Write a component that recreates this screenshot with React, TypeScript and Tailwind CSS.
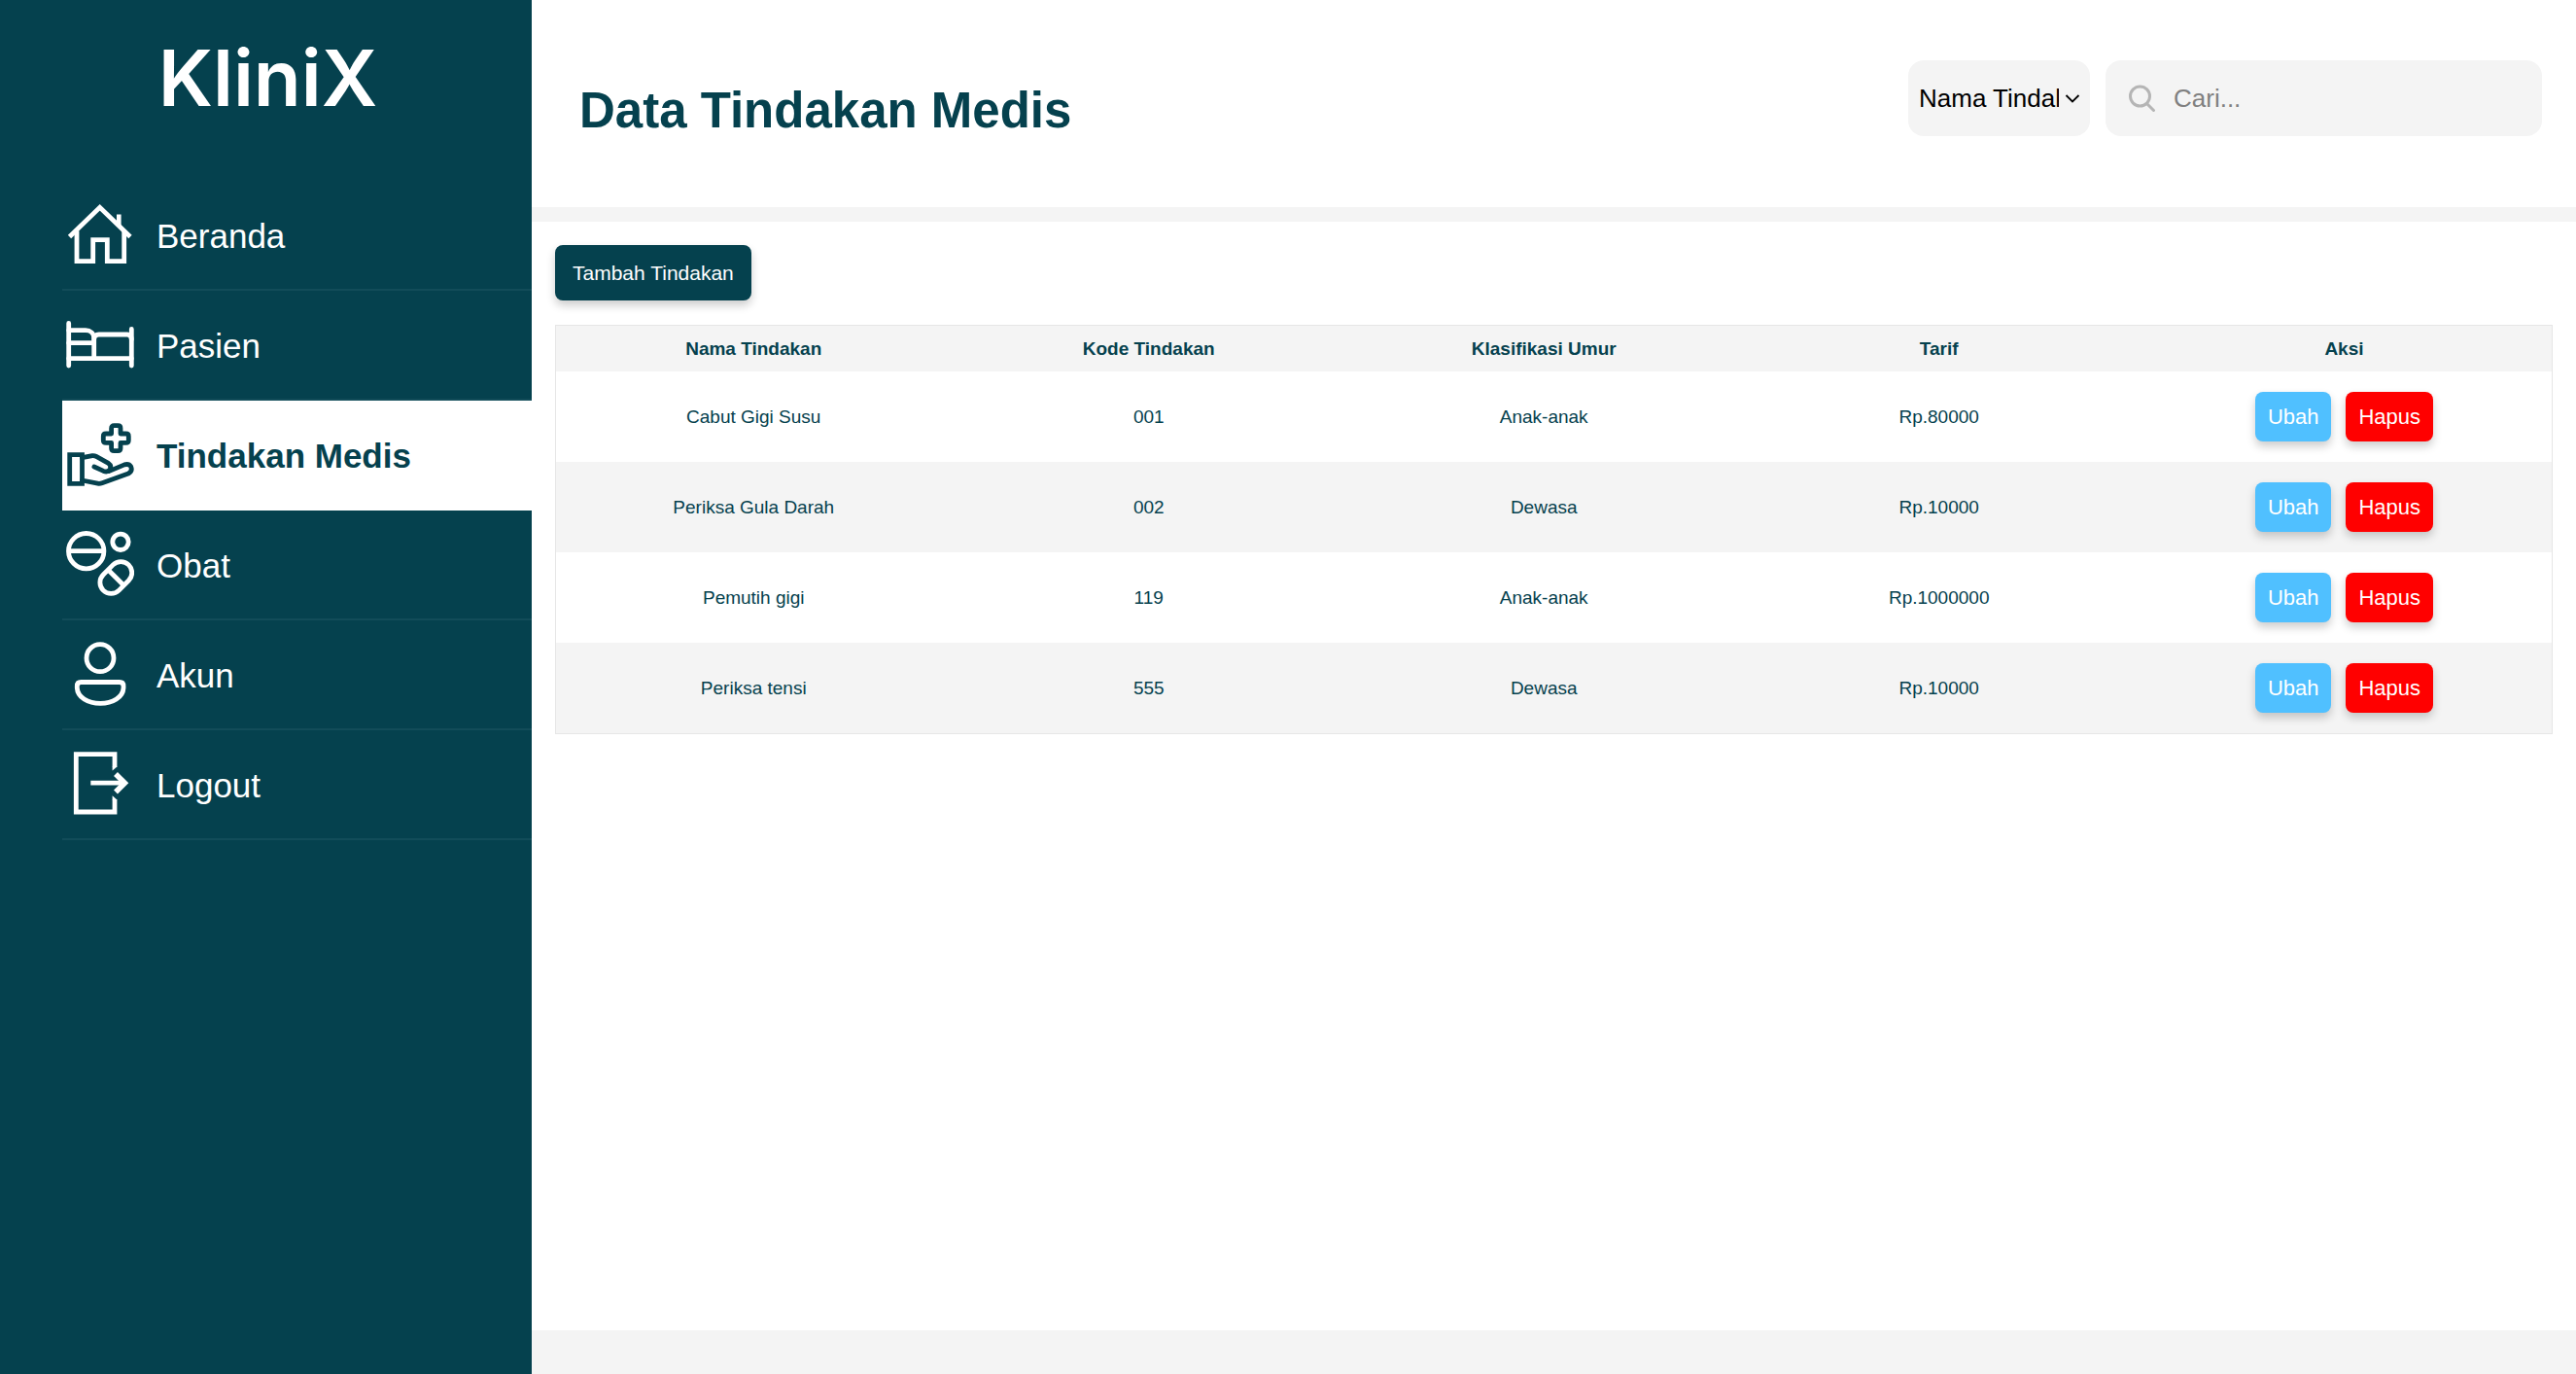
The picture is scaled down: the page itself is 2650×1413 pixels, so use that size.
import type { ReactNode } from "react";

const strokeProps = {
  fill: "none",
  stroke: "currentColor",
  strokeWidth: 4.8,
  "aria-hidden": true,
  viewBox: "0 0 72 73",
  className: "h-[73px] w-[72px] shrink-0",
} as const;

function HomeIcon() {
  return (
    <svg {...strokeProps}>
      <path d="M5.5 38.5 36.7 8.3 68 38.5" />
      <path d="M56.3 15.5V27" strokeWidth={4.6} />
      <path d="M13 32.5V63.6H29.7V41.6H44.3V63.6H61.7V32.5" />
    </svg>
  );
}

function BedIcon() {
  return (
    <svg {...strokeProps} strokeLinecap="round">
      <path d="M4.7 14.5V58M69.3 20.5V58" />
      <path d="M4.7 50.7H69.3M4.7 34.7H30.7" />
      <path d="M4.7 21.7H22C27 21.7 30.7 25 30.7 30V50.7" />
      <path d="M30.7 31C30.7 28 32.5 26 35.7 26H65C67.5 26 69.3 28 69.3 31" />
    </svg>
  );
}

function CareIcon() {
  return (
    <svg {...strokeProps} strokeLinejoin="round" strokeLinecap="round">
      <path d="M5.7 36.7H18.5V66.3H5.7Z" strokeLinejoin="miter" />
      <path d="M18.5 39.7 29 37.6Q31 37.3 33 38.4L45.5 45.4Q49 48 47.2 51.4Q45 55.2 40.5 53.4L30.9 49" />
      <path d="M46 53.6 62 46.9Q66.6 45.6 68.7 48.8Q70.6 53.6 66 56L39 65.8Q36.7 66.6 34.5 66.2L18.5 63" />
      <path d="M51.3 6.7H55.3Q58 6.7 58 9.4V15H63.6Q66.3 15 66.3 17.7V21.7Q66.3 24.4 63.6 24.4H58V30Q58 32.7 55.3 32.7H51.3Q48.6 32.7 48.6 30V24.4H43Q40.3 24.4 40.3 21.7V17.7Q40.3 15 43 15H48.6V9.4Q48.6 6.7 51.3 6.7Z" />
    </svg>
  );
}

function PillsIcon() {
  return (
    <svg {...strokeProps}>
      <circle cx="22.7" cy="22.7" r="18.2" />
      <path d="M4.5 22.7H40.9" />
      <circle cx="58" cy="13.3" r="8.2" />
      <g transform="rotate(-45 53.3 50)">
        <rect x="34.8" y="38.6" width="37" height="22.8" rx="11.4" />
        <path d="M53.3 38.6V61.4" />
      </g>
    </svg>
  );
}

function UserIcon() {
  return (
    <svg {...strokeProps}>
      <circle cx="37" cy="19.7" r="14" />
      <path d="M17.3 44.5H57Q61 44.5 61 48.5V50.5C60.5 60 50 66.4 37.2 66.4C24.4 66.4 13.8 60 13.3 50.5V48.5Q13.3 44.5 17.3 44.5Z" />
    </svg>
  );
}

function LogoutIcon() {
  return (
    <svg {...strokeProps}>
      <path d="M52 19V5.7H12.3V65H52V52" />
      <path d="M49.6 18.5V22.6L54.4 18.5ZM49.6 52.5V48.2L54.4 52.5Z" fill="currentColor" stroke="none" />
      <path d="M27.3 35.2H62" />
      <path d="M53 26 62.3 35.2 53 44.4" strokeWidth={5.6} />
    </svg>
  );
}

const navItems: { label: string; icon: ReactNode; active?: boolean }[] = [
  { label: "Beranda", icon: <HomeIcon /> },
  { label: "Pasien", icon: <BedIcon /> },
  { label: "Tindakan Medis", icon: <CareIcon />, active: true },
  { label: "Obat", icon: <PillsIcon /> },
  { label: "Akun", icon: <UserIcon /> },
  { label: "Logout", icon: <LogoutIcon /> },
];

const rows = [
  { nama: "Cabut Gigi Susu", kode: "001", umur: "Anak-anak", tarif: "Rp.80000" },
  { nama: "Periksa Gula Darah", kode: "002", umur: "Dewasa", tarif: "Rp.10000" },
  { nama: "Pemutih gigi", kode: "119", umur: "Anak-anak", tarif: "Rp.1000000" },
  { nama: "Periksa tensi", kode: "555", umur: "Dewasa", tarif: "Rp.10000" },
];

function Sidebar() {
  return (
    <aside className="w-[547px] shrink-0 bg-[#05414e] text-white">
      <div className="flex h-[186px] justify-center pt-8 pl-1">
        <span className="font-[Inter] text-[80px] leading-[96px] font-semibold">KliniX</span>
      </div>
      <nav className="pl-16">
        <ul>
          {navItems.map((item) => (
            <li key={item.label}>
              <a
                href="#"
                aria-current={item.active ? "page" : undefined}
                className={
                  item.active
                    ? "flex h-[113px] items-center gap-[23px] border-b-2 border-white bg-white pl-0.5 font-bold text-[#05414e]"
                    : "flex h-[113px] items-center gap-[23px] border-b-2 border-[#124c59] pl-0.5"
                }
              >
                {item.icon}
                <span className="pt-0.5 text-[35px] leading-10">{item.label}</span>
              </a>
            </li>
          ))}
        </ul>
      </nav>
    </aside>
  );
}

function Header() {
  return (
    <header className="flex h-[228px] items-start justify-between border-b-[15px] border-[#f4f4f4] pt-[62px] pr-[35px] pl-[49px]">
      <h1 className="mt-[22px] text-[51px] leading-[60px] font-bold">Data Tindakan Medis</h1>
      <div className="flex gap-4 text-[26px]">
        <div className="relative">
          <select
            aria-label="Cari berdasarkan"
            className="h-[78px] w-[187px] appearance-none rounded-2xl bg-[#f4f4f4] pr-[32px] pl-[11px] text-black"
          >
            <option>Nama Tindakan</option>
            <option>Kode Tindakan</option>
          </select>
          <svg
            viewBox="0 0 16 12"
            aria-hidden="true"
            className="pointer-events-none absolute top-[34px] right-[10px] h-3 w-4"
            fill="none"
            stroke="black"
            strokeWidth="1.8"
          >
            <path d="M1.5 2 8 8.5 14.5 2" />
          </svg>
        </div>
        <label className="flex h-[78px] w-[449px] items-center rounded-2xl bg-[#f4f4f4] pl-6">
          <svg
            viewBox="0 0 28 28"
            aria-hidden="true"
            className="h-7 w-7 shrink-0"
            fill="none"
            stroke="#b5b5b5"
            strokeWidth="3"
            strokeLinecap="round"
          >
            <circle cx="11.5" cy="12" r="10" />
            <path d="M18.5 19.5 25.5 26.5" />
          </svg>
          <input
            type="text"
            aria-label="Cari"
            placeholder="Cari..."
            className="ml-[18px] h-full min-w-0 flex-1 bg-transparent text-black outline-none placeholder:text-[#808080]"
          />
        </label>
      </div>
    </header>
  );
}

function TreatmentTable() {
  return (
    <div className="mt-[25px] border border-[#e6e6e6]">
      <table className="w-full table-fixed text-center text-[19px]">
        <colgroup>
          <col className="w-[19.8%]" />
          <col className="w-[19.8%]" />
          <col className="w-[19.8%]" />
          <col className="w-[19.8%]" />
          <col />
        </colgroup>
        <thead>
          <tr className="h-[47px] bg-[#f4f4f4]">
            <th className="pt-0.5">Nama Tindakan</th>
            <th className="pt-0.5">Kode Tindakan</th>
            <th className="pt-0.5">Klasifikasi Umur</th>
            <th className="pt-0.5">Tarif</th>
            <th className="pt-0.5">Aksi</th>
          </tr>
        </thead>
        <tbody>
          {rows.map((row) => (
            <tr key={row.kode} className="h-[93px] even:bg-[#f4f4f4]">
              <td className="pt-0.5">{row.nama}</td>
              <td className="pt-0.5">{row.kode}</td>
              <td className="pt-0.5">{row.umur}</td>
              <td className="pt-0.5">{row.tarif}</td>
              <td>
                <div className="flex justify-center gap-[15px] text-[22px] text-white">
                  <button className="h-[51px] rounded-lg bg-[#50c0ff] px-[13px] shadow-[0_5px_10px_rgba(0,0,0,0.2)]">
                    Ubah
                  </button>
                  <button className="h-[51px] rounded-lg bg-[#ff0000] px-[13px] shadow-[0_5px_10px_rgba(0,0,0,0.2)]">
                    Hapus
                  </button>
                </div>
              </td>
            </tr>
          ))}
        </tbody>
      </table>
    </div>
  );
}

export default function App() {
  return (
    <div className="flex min-h-screen bg-white font-['Liberation_Sans',Arial,sans-serif] text-[#05414e]">
      <Sidebar />
      <div className="flex min-w-0 flex-1 flex-col">
        <Header />
        <main className="flex-1 p-6">
          <button className="h-[57px] rounded-lg bg-[#05414e] px-[18px] text-[21px] text-white shadow-[0_5px_10px_rgba(0,0,0,0.2)]">
            Tambah Tindakan
          </button>
          <TreatmentTable />
        </main>
        <footer className="h-[45px] bg-[#f4f4f4]" />
      </div>
    </div>
  );
}
